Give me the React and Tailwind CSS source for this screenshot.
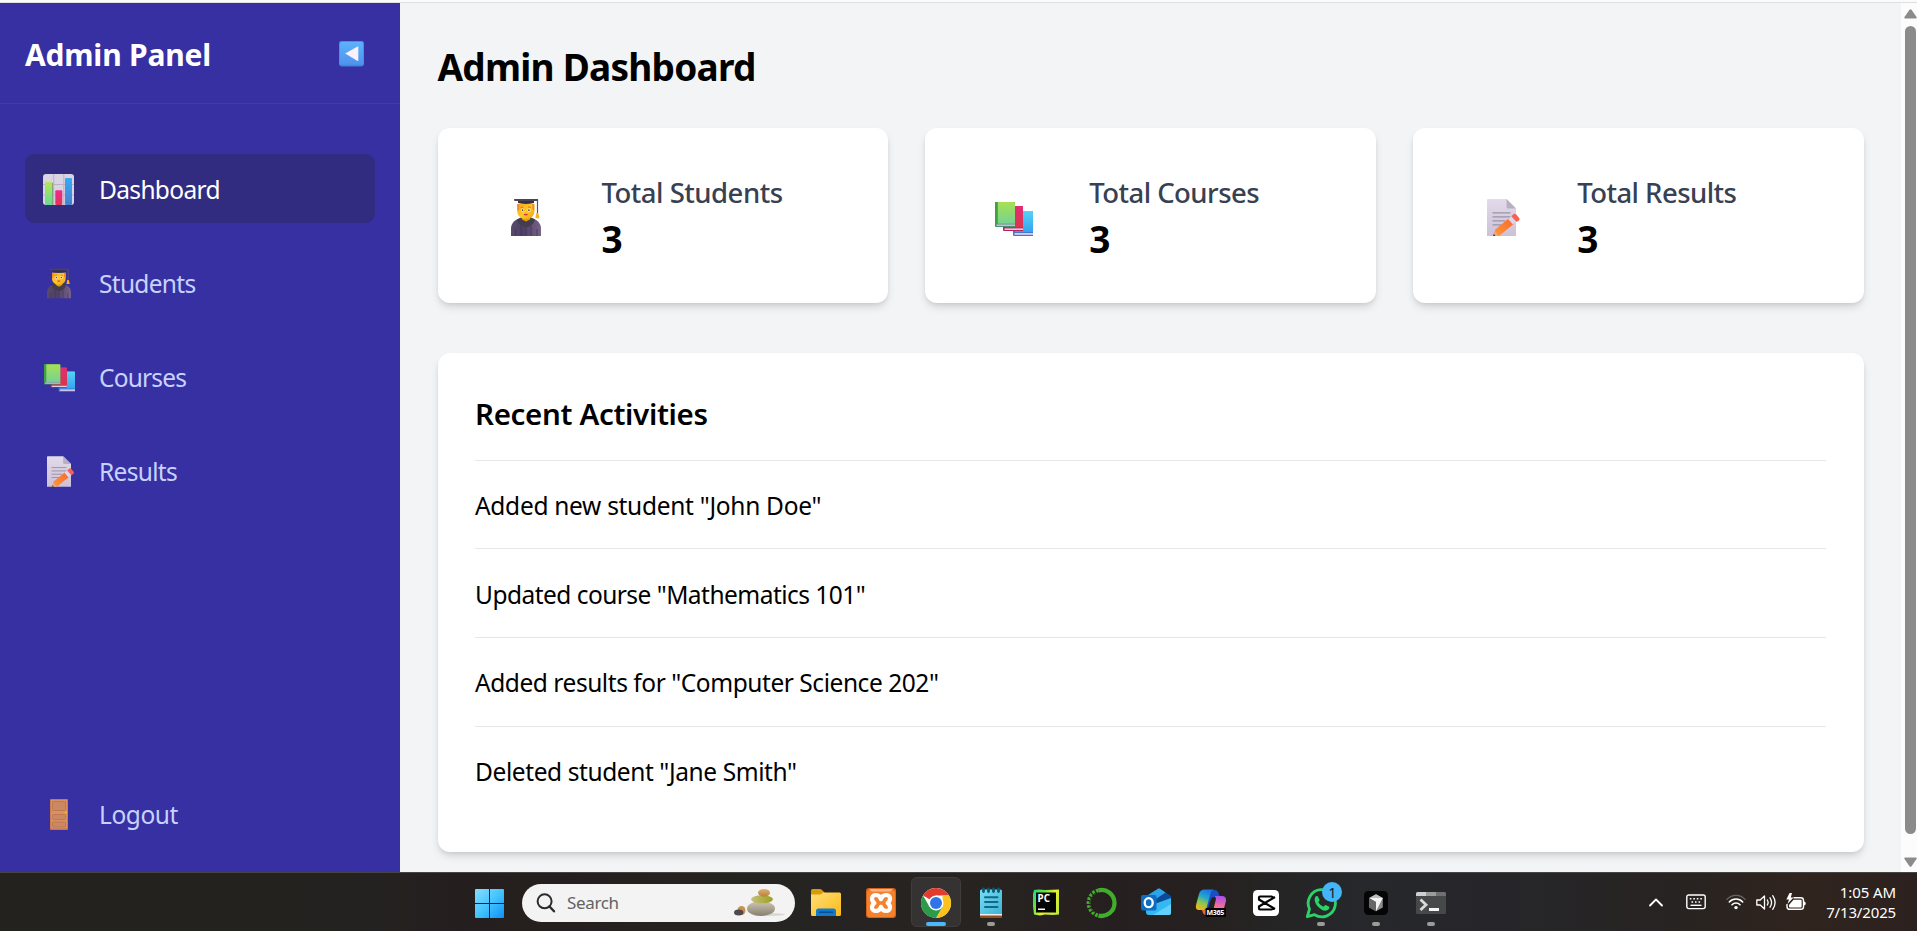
import React from "react";

/* ---------- Emoji-style icons ---------- */

function BackIcon() {
  return (
    <svg width="25" height="26" viewBox="0 0 25 26" className="mt-px">
      <defs>
        <linearGradient id="backBg" x1="0" y1="0" x2="0" y2="1">
          <stop offset="0" stopColor="#5cb2fb" />
          <stop offset="1" stopColor="#4f93ec" />
        </linearGradient>
      </defs>
      <rect width="25" height="25.6" rx="3" fill="#3f7cd0" />
      <rect x="0" y="0" width="25" height="24.6" rx="3" fill="#4591e6" />
      <rect x="1" y="1" width="23" height="22.6" rx="2" fill="url(#backBg)" />
      <path d="M6.2 12.6 18.6 5.6a.5.5 0 0 1 .7.5v13.4a.5.5 0 0 1-.7.4z" fill="#fbf0fb" />
    </svg>
  );
}

function ChartIcon() {
  return (
    <svg width="31" height="31" viewBox="0 0 31 31" className="mr-px">
      <defs>
        <linearGradient id="barG" x1="0" y1="0" x2="0" y2="1">
          <stop offset="0" stopColor="#b5e655" />
          <stop offset="1" stopColor="#62dc94" />
        </linearGradient>
        <linearGradient id="barR" x1="0" y1="0" x2="0" y2="1">
          <stop offset="0" stopColor="#f02b8c" />
          <stop offset="1" stopColor="#dc3653" />
        </linearGradient>
        <linearGradient id="barB" x1="0" y1="0" x2="0" y2="1">
          <stop offset="0" stopColor="#38aaf6" />
          <stop offset="1" stopColor="#4182d2" />
        </linearGradient>
      </defs>
      <rect width="31" height="31" rx="3" fill="#dad4e2" />
      <path d="M10.7 0v31M20.8 0v31M0 10.5h31M0 21h31" stroke="#b9b2c4" strokeWidth="1" />
      <rect x="2" y="8" width="7.6" height="23" rx="1" fill="url(#barG)" />
      <path d="M9.6 9v22" stroke="#7fa07b" strokeWidth="1" />
      <rect x="12.3" y="16.3" width="7" height="14.7" rx="1" fill="url(#barR)" />
      <rect x="22" y="4" width="7" height="27" rx="1" fill="url(#barB)" />
    </svg>
  );
}

function StudentIcon({ className }) {
  return (
    <svg className={className} viewBox="0 0 30 37">
      <defs>
        <linearGradient id="robe" x1="0" y1="0" x2="1" y2="0">
          <stop offset="0" stopColor="#564b68" />
          <stop offset=".4" stopColor="#4f3f69" />
          <stop offset="1" stopColor="#766386" />
        </linearGradient>
        <linearGradient id="face" x1="0" y1="0" x2="1" y2="1">
          <stop offset="0" stopColor="#f6a81c" />
          <stop offset=".5" stopColor="#ffc928" />
          <stop offset="1" stopColor="#f0a010" />
        </linearGradient>
      </defs>
      <path d="M0 37V29.500C0 23.500 5 19.500 11 19h8c6 .5 11 4.500 11 10.500V37z" fill="url(#robe)" />
      <path d="M10 27v10M15 28v9M20 27v10M4.500 30v7M26 30v7" stroke="#40344f" strokeWidth=".7" />
      <path d="M6 20.500 11 18h8l5 2.500c-1 4-4.500 7.500-9 7.500s-8-3.500-9-7.500z" fill="#443d4c" />
      <path d="M10 16h10l-1 4.500-4 2-4-2z" fill="#e39c0a" />
      <path d="M6.300 5h17v8c0 4-4 7-8.500 7s-8.500-3-8.500-7z" fill="url(#face)" />
      <path d="M6.300 5h2v5l-2 2zM23.300 5h-2v5l2 2z" fill="#f28b22" />
      <circle cx="11.500" cy="11" r="1.500" fill="#fff" />
      <circle cx="18" cy="11" r="1.500" fill="#fff" />
      <circle cx="11.600" cy="11.100" r=".9" fill="#4b3549" />
      <circle cx="17.900" cy="11.100" r=".9" fill="#4b3549" />
      <path d="M9.500 8.400 12.500 8M17 8l3 .4" stroke="#c96b17" strokeWidth=".8" />
      <path d="M12.400 15.200q2.400-1 4.800 0-2.400 2.400-4.800 0z" fill="#d9304a" />
      <path d="M7 1.200h16V4q-8 2-16 0z" fill="#37303f" />
      <rect x="3" y="0" width="24.200" height="1.900" rx=".8" fill="#4b4357" />
      <path d="M26.500 1v13.500" stroke="#5b5068" strokeWidth="1.200" />
      <path d="M25.300 14h2l1.200 5.200h-4.200z" fill="#f7b21a" />
    </svg>
  );
}

function BooksIcon({ className }) {
  return (
    <svg className={className} viewBox="0 0 38 34">
      <defs>
        <linearGradient id="bkG" x1="0" y1="0" x2="0" y2="1">
          <stop offset="0" stopColor="#a8e052" />
          <stop offset="1" stopColor="#74d392" />
        </linearGradient>
        <linearGradient id="bkR" x1="0" y1="0" x2="0" y2="1">
          <stop offset="0" stopColor="#e32c78" />
          <stop offset="1" stopColor="#dc3547" />
        </linearGradient>
        <linearGradient id="bkB" x1="0" y1="0" x2="0" y2="1">
          <stop offset="0" stopColor="#57d2f7" />
          <stop offset="1" stopColor="#35a4ef" />
        </linearGradient>
      </defs>
      <path d="M18 9h19q1 0 1 1v24H19q-1 0-1-1.500z" fill="#3d79cf" />
      <path d="M20 9h17q1 0 1 1v20H20z" fill="url(#bkB)" />
      <rect x="19.500" y="31" width="18.500" height="1.800" fill="#dccdf0" />
      <path d="M8 4h19q1 0 1 1v24H9q-1 0-1-1.500z" fill="#b32459" />
      <path d="M10 4h17q1 0 1 1v20.500H10z" fill="url(#bkR)" />
      <rect x="9.500" y="26.400" width="18.500" height="1.600" fill="#e3cdec" />
      <path d="M0 0h20v25H1.200Q0 25 0 23.500z" fill="#3f8b65" />
      <path d="M0 0h3v21.500L0 23z" fill="#3fa144" />
      <path d="M2.800 0H19q1 0 1 1v20.800H2.800z" fill="url(#bkG)" />
      <rect x="1.500" y="22.400" width="18.500" height="1.700" fill="#c3bfd8" />
    </svg>
  );
}

function MemoIcon({ className }) {
  return (
    <svg className={className} viewBox="0 0 29 37">
      <defs>
        <linearGradient id="paper" x1="0" y1="0" x2="0" y2="1">
          <stop offset="0" stopColor="#e2dbea" />
          <stop offset="1" stopColor="#cdc0d8" />
        </linearGradient>
        <linearGradient id="pencil" x1="0" y1="1" x2="1" y2="0">
          <stop offset="0" stopColor="#ff9a3c" />
          <stop offset="1" stopColor="#f8672a" />
        </linearGradient>
      </defs>
      <path d="M0 1q0-1 1-1h18.500L29 9.500V37H0z" fill="url(#paper)" />
      <path d="M19.500 0 29 9.500h-8q-1.500 0-1.500-1.500z" fill="#b9afc3" />
      <path d="M5.500 13.800h18M5.500 17.800h18M5.500 21.800h13M5.500 25.800h9" stroke="#9b93a6" strokeWidth="1.200" />
      <path d="m6 37 2.300-6.600L22.300 19l5 5.500L12 37z" fill="url(#pencil)" />
      <path d="m6 37 2-5 4 5z" fill="#e2a98a" />
      <path d="m6 37 .8-2L8.500 37z" fill="#45323a" />
      <path d="m21 20 3.600-3 4.900 5.600-3.500 3z" fill="#ddd5ea" />
      <path d="m24.300 17.200 2.400-2.100q1.200-1 2.300.2l3.200 3.600q1 1.200-.2 2.300L29.500 23z" fill="#fb5f52" />
    </svg>
  );
}

function DoorIcon() {
  return (
    <svg width="18" height="31" viewBox="0 0 18 31">
      <rect width="18" height="31" rx=".8" fill="#c5744c" />
      <rect x=".8" y=".8" width="16.400" height="28.600" fill="#db905e" />
      <rect x="2.500" y="2.500" width="13" height="9" rx=".8" fill="#c98a63" stroke="#b97450" strokeWidth=".8" />
      <rect x="2.500" y="15.500" width="13" height="5" rx=".8" fill="#c98a63" stroke="#b97450" strokeWidth=".8" />
      <rect x="2.500" y="23" width="13" height="5" rx=".8" fill="#c98a63" stroke="#b97450" strokeWidth=".8" />
      <circle cx="16" cy="13.500" r="1.300" fill="#fbad13" />
    </svg>
  );
}

/* ---------- Sidebar ---------- */

function NavItem({ icon, label, track, active }) {
  return (
    <a
      className={
        "flex h-[68.75px] w-[350px] items-center rounded-[9px] pl-[18px] " +
        (active ? "bg-[#312c80] text-white" : "text-[#c7d2fe]")
      }
    >
      <span className="flex w-8 justify-center pt-[3px]">{icon}</span>
      <span className={"ml-[24px] pt-[4px] text-[24.5px] leading-[34px] " + track}>{label}</span>
    </a>
  );
}

function Sidebar() {
  return (
    <aside className="flex w-[400px] shrink-0 flex-col bg-[#3730a3]">
      <div className="flex h-[101px] shrink-0 items-center justify-between border-b border-[#4137bf] pr-9 pl-[25px] text-white">
        <h2 className="pt-[3px] text-[30px] leading-[40px] font-bold tracking-[-0.2px]">Admin Panel</h2>
        <BackIcon />
      </div>
      <nav className="flex flex-col gap-[25px] px-[25px] pt-[50px]">
        <NavItem active icon={<ChartIcon />} label="Dashboard" track="tracking-[-0.66px]" />
        <NavItem icon={<StudentIcon className="h-[31px] w-6" />} label="Students" track="tracking-[-0.7px]" />
        <NavItem icon={<BooksIcon className="mt-[2px] ml-px h-7 w-[31px]" />} label="Courses" track="tracking-[-0.8px]" />
        <NavItem icon={<MemoIcon className="h-[31px] w-6 overflow-visible" />} label="Results" track="tracking-[-0.7px]" />
      </nav>
      <div className="mt-auto px-[25px] pb-[25px]">
        <NavItem icon={<DoorIcon />} label="Logout" track="tracking-[-0.45px]" />
      </div>
    </aside>
  );
}

/* ---------- Main ---------- */

const cardShadow = "shadow-[0_5px_8px_-1px_rgba(0,0,0,0.13),0_2.5px_5px_-2.5px_rgba(0,0,0,0.12)]";

function StatCard({ icon, label, track }) {
  return (
    <div className={"flex h-[175px] items-center rounded-[12px] bg-white " + cardShadow}>
      <div className="ml-[68px] flex w-10 justify-center">{icon}</div>
      <div className="ml-[56px] pt-px">
        <p className={"text-[27.5px] leading-[44px] font-medium text-[#374151] " + track}>{label}</p>
        <p className="text-[37px] leading-[47px] font-bold text-black">3</p>
      </div>
    </div>
  );
}

const activities = [
  { text: 'Added new student "John Doe"', track: "tracking-[-0.3px]" },
  { text: 'Updated course "Mathematics 101"', track: "tracking-[-0.53px]" },
  { text: 'Added results for "Computer Science 202"', track: "tracking-[-0.45px]" },
  { text: 'Deleted student "Jane Smith"', track: "tracking-[-0.41px]" },
];

function Main() {
  return (
    <main className="min-w-0 flex-1 bg-[#f3f4f6] px-[37.5px] pt-[37.5px] text-black">
      <h1 className="mb-[35.5px] text-[37px] leading-[52px] font-bold tracking-[-0.76px]">Admin Dashboard</h1>
      <div className="grid grid-cols-3 gap-[37.5px]">
        <StatCard icon={<StudentIcon className="mt-[4px] h-[37px] w-[30px]" />} label="Total Students" track="tracking-[-0.5px]" />
        <StatCard icon={<BooksIcon className="mt-[7px] ml-[2px] h-[34px] w-[38px]" />} label="Total Courses" track="tracking-[-0.55px]" />
        <StatCard icon={<MemoIcon className="mt-[4px] h-[37px] w-[29px] overflow-visible" />} label="Total Results" track="tracking-[-0.54px]" />
      </div>
      <section className={"mt-[50px] h-[498.5px] rounded-[12px] bg-white p-[37.5px] " + cardShadow}>
        <h2 className="text-[29.5px] leading-[46px] font-semibold tracking-[-0.33px]">Recent Activities</h2>
        <ul className="mt-[23px]">
          {activities.map((a) => (
            <li
              key={a.text}
              className={"flex h-[88.75px] items-center border-t border-[#e5e7eb] pt-[3px] text-[24.5px] leading-[36px] " + a.track}
            >
              {a.text}
            </li>
          ))}
        </ul>
      </section>
    </main>
  );
}

function Scrollbar() {
  return (
    <div className="flex w-4 shrink-0 flex-col items-center bg-[#fcfcfc] pt-[6px] pb-[5px] pl-[3px]">
      <svg width="13" height="10" viewBox="0 0 13 10">
        <path d="M5.500.8q1-1.200 2 0l5 7.200q.7 1.500-.8 1.600H1.300Q-.2 9.500.5 8z" fill="#8b8b8b" />
      </svg>
      <div className="mt-[7px] w-[11px] flex-1 rounded-full bg-[#8b8b8b]" />
      <svg className="mt-[23px]" width="13" height="10" viewBox="0 0 13 10">
        <path d="M5.500 9.200q1 1.200 2 0l5-7.200q.7-1.500-.8-1.600H1.300Q-.2.500.5 2z" fill="#8b8b8b" />
      </svg>
    </div>
  );
}

/* ---------- Taskbar ---------- */

function Slot({ children }) {
  return (
    <svg width="55" height="58" viewBox="0 0 55 58" className="shrink-0">
      {children}
    </svg>
  );
}

function RunningDot() {
  return <rect x="23" y="49" width="8" height="4" rx="2" fill="#9d9a9a" />;
}

function ExplorerIcon() {
  return (
    <Slot>
      <defs>
        <linearGradient id="fold" x1="0" y1="0" x2="1" y2="1">
          <stop offset="0" stopColor="#ffdf77" />
          <stop offset="1" stopColor="#fbb917" />
        </linearGradient>
      </defs>
      <path d="M12 17.500q0-1.500 1.500-1.500h7.500q1 0 2 1l2.500 2.500V25H12z" fill="#d99a08" />
      <path d="M12 21.500h9q1 0 2-1l1-1h16.500q1.500 0 1.500 1.500v20.500q0 1.500-1.500 1.500h-27Q12 43 12 41.500z" fill="url(#fold)" />
      <path d="M17 43v-5q0-2.500 2.500-2.500h15Q37 35.500 37 38v5z" fill="#0f7ad0" />
      <path d="M20.500 39.200h13" stroke="#0a4f92" strokeWidth="1.500" strokeLinecap="round" />
    </Slot>
  );
}

function XamppIcon() {
  return (
    <Slot>
      <rect x="12" y="15" width="30" height="30" rx="3" fill="#d6621c" />
      <rect x="13" y="17" width="28" height="27" rx="3" fill="#f5812c" />
      <path d="M15 16h24l-3 2.600H18z" fill="#f7b48a" />
      <path
        d="M27 26.300C25.500 20.600 18 20.800 18 25.600q0 2.800 2.400 4.400-2.400 1.600-2.400 4.400C18 39.200 25.500 39.400 27 33.700 28.500 39.400 36 39.200 36 34.400q0-2.800-2.400-4.400 2.400-1.600 2.400-4.400C36 20.800 28.500 20.600 27 26.300z"
        fill="none"
        stroke="#fff"
        strokeWidth="4.200"
        strokeLinejoin="round"
      />
      <path d="M24 30h6" stroke="#f5812c" strokeWidth="2.600" strokeLinecap="round" />
    </Slot>
  );
}

function ChromeIcon() {
  return (
    <Slot>
      <rect x="2.500" y="4.500" width="49" height="49" rx="5" fill="#353331" stroke="#403e3c" />
      <circle cx="27" cy="30" r="15" fill="#fff" />
      <path d="M27 30 14 22.500A15 15 0 0 1 40 22.500H27z" fill="#e33b2e" />
      <path d="M40 22.500A15 15 0 0 1 27 45l6.500-11.200L33.500 22.500z" fill="#fcc31e" />
      <path d="M14 22.500A15 15 0 0 0 27 45l6.500-11.200L20.500 33.700z" fill="#2c9a48" />
      <circle cx="27" cy="30" r="7.500" fill="#fff" />
      <circle cx="27" cy="30" r="6" fill="#2f74e8" />
      <rect x="17" y="49" width="20" height="4" rx="2" fill="#4cb8fb" />
    </Slot>
  );
}

function NotepadIcon() {
  return (
    <Slot>
      <defs>
        <linearGradient id="note" x1="0" y1="0" x2="1" y2="1">
          <stop offset="0" stopColor="#77dcf3" />
          <stop offset="1" stopColor="#3fb3d6" />
        </linearGradient>
      </defs>
      <rect x="16" y="40" width="22" height="5" rx="1" fill="#93501f" />
      <rect x="16" y="38" width="22" height="4.500" fill="#f1efee" />
      <path d="M16 18q0-1.500 1.500-1.500h19Q38 16.500 38 18v23H16z" fill="url(#note)" />
      <path d="M19.500 16v2.500M24.500 16v2.500M29.500 16v2.500M34.500 16v2.500" stroke="#0d5873" strokeWidth="2.800" strokeLinecap="round" />
      <path d="M21 24.200h12.500M21 29h12.500M21 34h12.500" stroke="#12688a" strokeWidth="2" strokeLinecap="round" />
      <RunningDot />
    </Slot>
  );
}

function PyCharmIcon() {
  return (
    <Slot>
      <defs>
        <linearGradient id="pyc" x1="0" y1="0" x2="1" y2=".6">
          <stop offset="0" stopColor="#21d789" />
          <stop offset=".35" stopColor="#63e23a" />
          <stop offset=".65" stopColor="#e8f230" />
          <stop offset="1" stopColor="#c4e83c" />
        </linearGradient>
      </defs>
      <path d="M14 21 15 17l5-.5 6 .5 14-.5v25l-6 .5-8-.5-5 1-6-1-1-8z" fill="url(#pyc)" />
      <rect x="17" y="19.500" width="20" height="20" fill="#050505" />
      <text x="18.600" y="29" fontFamily="Noto Sans, sans-serif" fontWeight="700" fontSize="9.800" fill="#fff">PC</text>
      <rect x="19" y="35.500" width="7" height="1.500" fill="#fff" />
    </Slot>
  );
}

function AnacondaIcon() {
  return (
    <Slot>
      <path d="M24 17.300A13 13 0 1 1 24 42.600" transform="translate(.5 0)" fill="none" stroke="#41ae2b" strokeWidth="4.300" />
      <path d="M24.500 17.300A13 13 0 0 0 24.500 42.600" fill="none" stroke="#41ae2b" strokeWidth="3.800" strokeDasharray="2.600 1.300" />
      <path d="M22 19.500A12 12 0 0 0 22 40.500" fill="none" stroke="#242020" strokeWidth="1" strokeDasharray="2 1.500" />
    </Slot>
  );
}

function OutlookIcon() {
  return (
    <Slot>
      <path d="M16 24 29 15.800q1-.6 2 0L42 23.500V38L20 41z" fill="#1268b8" />
      <path d="M18 22.700 29 15.800q1-.6 2 0l5.500 3.700-17 11.500z" fill="#2ea3ea" />
      <path d="m19 31 18-11.300 5 3.600v4L26 36z" fill="#0b4a98" />
      <path d="M17 34 42 25v14.500q0 2.500-2.500 2.500H20q-3 0-3-3z" fill="#35b8f1" />
      <path d="m24 42 18-11v8.500q0 2.500-2.500 2.500z" fill="#5ed2fa" />
      <rect x="12" y="22" width="15.500" height="15.500" rx="1.800" fill="#0f6cc4" />
      <ellipse cx="19.700" cy="29.700" rx="4" ry="4.500" fill="none" stroke="#fff" strokeWidth="2.300" />
    </Slot>
  );
}

function CopilotIcon() {
  return (
    <Slot>
      <defs>
        <linearGradient id="cpA" x1=".6" y1="0" x2=".2" y2="1">
          <stop offset="0" stopColor="#1d74e8" />
          <stop offset=".35" stopColor="#22a5cf" />
          <stop offset=".65" stopColor="#8fc64b" />
          <stop offset="1" stopColor="#f6b41f" />
        </linearGradient>
        <linearGradient id="cpB" x1=".5" y1="0" x2=".4" y2="1">
          <stop offset="0" stopColor="#a951e6" />
          <stop offset=".5" stopColor="#ee6ca0" />
          <stop offset="1" stopColor="#f79a4a" />
        </linearGradient>
      </defs>
      <path d="M22 17h9q2.500 0 3.300 2.500L36 24h-6q-2 0-3 2l-4 12-6-4z" fill="#1a4fc4" />
      <path d="M20.500 16.500H30q-2.500.5-3.500 4L22.500 35q-.6 2-3 2H15q-4 0-3-5l3-11q1.200-4.500 5.500-4.500z" fill="url(#cpA)" />
      <path d="M31 23h7q4.500 0 4 5l-2.500 9q-1.200 5-5.500 5h-9q3 0 4-4l3-12z" fill="url(#cpB)" />
      <path d="M18 37h6l-2 5q-3 0-4-5z" fill="#f2642e" />
      <rect x="21.500" y="35" width="20.500" height="9" rx="1" fill="#050505" />
      <text x="22.600" y="42.200" fontFamily="Noto Sans, sans-serif" fontWeight="700" fontSize="7" textLength="17.600" fill="#fff">M365</text>
    </Slot>
  );
}

function CapCutIcon() {
  return (
    <Slot>
      <rect x="14" y="17" width="26" height="26" rx="4.500" fill="#fff" />
      <path d="M36 24 20 33.500v2q0 1 1 1h11.500q1 0 1-1v-1M36 36 20 26.500v-2q0-1 1-1h11.500q1 0 1 1v1" fill="none" stroke="#050505" strokeWidth="2.200" />
    </Slot>
  );
}

function WhatsAppIcon() {
  return (
    <Slot>
      <path d="M13.300 43.700 15.500 36A13.600 13.600 0 1 1 20.500 41.700z" fill="#25292a" stroke="#2bd366" strokeWidth="2.800" strokeLinejoin="round" />
      <path d="M21 24.500q1.200-2 2.800-1.300l1.700 3.700q.2.700-1.200 2.300 1.700 3 5.200 4.500 1.500-2 2.200-1.700l3.600 1.800q.5 2.700-3 3.800-3.700.8-8-3.500-4.700-4.800-3.300-9.600z" fill="#2bd366" />
      <circle cx="38" cy="19" r="10" fill="#43b5f8" />
      <text x="38.500" y="24.500" textAnchor="middle" fontFamily="Noto Sans, sans-serif" fontSize="14.500" fill="#0d1c28">1</text>
      <RunningDot />
    </Slot>
  );
}

function CursorIcon() {
  return (
    <Slot>
      <rect x="15" y="18" width="24" height="24" rx="4.500" fill="#050505" />
      <path d="m27 21.300 6.800 3.800v9.400L27 38.300l-6.800-3.800v-9.400z" fill="#8a8a8a" />
      <path d="m27 21.300 6.800 3.800H20.200z" fill="#bdbdbd" />
      <path d="M20.200 25.100h13.600L27 38.300V29z" fill="#f3f3f3" />
      <path d="m20.200 25.100 6.800 3.900v9.300l-6.800-3.800z" fill="#676767" />
      <RunningDot />
    </Slot>
  );
}

function TerminalIcon() {
  return (
    <Slot>
      <rect x="12" y="19" width="30" height="22" rx="1.500" fill="#47484a" />
      <path d="M12 23v-2.500q0-1.500 1.500-1.500H22v4z" fill="#cfcfcf" />
      <path d="M22 19h10v4H22z" fill="#9b9b9b" />
      <path d="M32 19h8.500q1.500 0 1.500 1.500V23H32z" fill="#6f7072" />
      <path d="m16.500 26.500 5.500 5.300-5.500 5.300" fill="none" stroke="#d9d9d9" strokeWidth="2.800" />
      <rect x="25" y="35" width="10" height="3" fill="#f5f5f5" />
      <RunningDot />
    </Slot>
  );
}

function WindowsIcon() {
  return (
    <svg width="29" height="29" viewBox="0 0 29 29">
      <defs>
        <linearGradient id="win" x1="0" y1="0" x2="1" y2="1">
          <stop offset="0" stopColor="#86dcfd" />
          <stop offset=".5" stopColor="#44c4fd" />
          <stop offset="1" stopColor="#0d90f8" />
        </linearGradient>
      </defs>
      <path d="M0 1q0-1 1-1h13v14H0zM15 0h13q1 0 1 1v13H15zM0 15h14v14H1q-1 0-1-1zM15 15h14v13q0 1-1 1H15z" fill="url(#win)" />
    </svg>
  );
}

function StonesIcon() {
  return (
    <svg width="52" height="28" viewBox="0 0 52 28">
      <defs>
        <linearGradient id="st1" x1="0" y1="0" x2="0" y2="1">
          <stop offset="0" stopColor="#d0c8b4" />
          <stop offset="1" stopColor="#877f6f" />
        </linearGradient>
        <linearGradient id="st2" x1="0" y1="0" x2="1" y2="0">
          <stop offset="0" stopColor="#c5bf7c" />
          <stop offset="1" stopColor="#9aa21e" />
        </linearGradient>
        <linearGradient id="st3" x1="0" y1="0" x2="0" y2="1">
          <stop offset="0" stopColor="#e0b173" />
          <stop offset="1" stopColor="#b87f3c" />
        </linearGradient>
      </defs>
      <ellipse cx="34" cy="25.500" rx="17" ry="1.500" fill="#d9d6d2" />
      <ellipse cx="7.500" cy="21.500" rx="4" ry="4.500" fill="#c8924e" />
      <ellipse cx="4.700" cy="23.500" rx="4.700" ry="3" fill="#4b4b4d" />
      <ellipse cx="27" cy="19.500" rx="14" ry="7.500" fill="url(#st1)" />
      <ellipse cx="28" cy="10.300" rx="11" ry="4" fill="url(#st2)" />
      <ellipse cx="30" cy="3.800" rx="6" ry="3.800" fill="url(#st3)" />
    </svg>
  );
}

function Taskbar() {
  return (
    <footer className="flex h-[59px] shrink-0 items-center border-t border-[#474544] bg-[linear-gradient(90deg,#24221f_0%,#242220_20%,#251e1e_24%,#252421_40%,#272321_52%,#261f1f_58%,#25211f_63%,#26282c_71%,#26262a_78%,#282321_88%,#30241e_94%,#2c211e_100%)]">
      <div className="ml-[475px] pt-[2px]">
        <WindowsIcon />
      </div>
      <div className="mt-px ml-[18px] flex h-[38px] w-[273px] items-center rounded-full bg-[#f3f3f3] pl-[14px]">
        <svg width="20" height="20" viewBox="0 0 20 20" fill="none" stroke="#2c2c2e" strokeWidth="2">
          <circle cx="8.600" cy="8.300" r="7" />
          <path d="m13.500 13.500 4.500 4.800" strokeWidth="2.400" strokeLinecap="round" />
        </svg>
        <span className="ml-[11px] w-[60px] pt-px text-[17px] leading-6 tracking-[-0.35px] text-[#626262]">Search</span>
        <span className="ml-[107px]">
          <StonesIcon />
        </span>
      </div>
      <div className="ml-[4px] flex">
        <ExplorerIcon />
        <XamppIcon />
        <ChromeIcon />
        <NotepadIcon />
        <PyCharmIcon />
        <AnacondaIcon />
        <OutlookIcon />
        <CopilotIcon />
        <CapCutIcon />
        <WhatsAppIcon />
        <CursorIcon />
        <TerminalIcon />
      </div>
      <div className="ml-auto flex items-center">
        <svg width="14" height="9" viewBox="0 0 14 9" fill="none" stroke="#fff" strokeWidth="1.800" strokeLinecap="round" strokeLinejoin="round">
          <path d="m1 7.500 6-6 6 6" />
        </svg>
        <svg className="ml-[23px]" width="20" height="16" viewBox="0 0 20 16" fill="none" stroke="#fff" strokeWidth="1.400">
          <rect x=".8" y="1" width="18.400" height="13.600" rx="2" />
          <path d="M3.800 4.800h13" strokeWidth="1.600" strokeDasharray="1.600 1.900" />
          <path d="M5.500 8h10" strokeWidth="1.600" strokeDasharray="1.600 1.900" />
          <path d="M4.500 11.300h11" />
        </svg>
        <svg className="ml-[20px]" width="20" height="16" viewBox="0 0 20 16" fill="none" stroke="#fff" strokeWidth="1.600" strokeLinecap="round">
          <path d="M.9 5.400a12.300 12.300 0 0 1 18.200 0" stroke="#6b6664" strokeWidth="1.300" />
          <path d="M3.300 8a9 9 0 0 1 13.400 0" />
          <path d="M6 10.700a5.600 5.600 0 0 1 8 0" />
          <circle cx="10" cy="13.600" r="1.700" fill="#fff" stroke="none" />
        </svg>
        <svg className="ml-[10px]" width="20" height="17" viewBox="0 0 20 17" fill="none" stroke="#fff" strokeWidth="1.300" strokeLinecap="round" strokeLinejoin="round">
          <path d="M.8 6v5h3.400l4.300 4V2L4.200 6z" />
          <path d="M11.300 6q1.600 2.500 0 5M14 3.800q3.200 4.700 0 9.400M16.700 1.700q4.800 6.800 0 13.600" />
        </svg>
        <svg className="ml-[10px]" width="20" height="18" viewBox="0 0 20 18">
          <path d="M7.500 4.700h7.300q2.700 0 2.700 2.700v6.300q0 2.600-2.700 2.600H3.700Q1 16.300 1 13.700V11" fill="none" stroke="#fff" strokeWidth="1.400" />
          <path d="M7.500 6.700H15q.6 0 .6.800v6q0 .9-.8.900H4q-1 0-1-.9V12z" fill="#fff" />
          <path d="M18 8.500q1.700.2 1.700 2t-1.700 2z" fill="#fff" />
          <path d="M3.500 0 .3 6.500H3L1.500 11 7.500 4.500H4.800L6 0z" fill="#fff" />
        </svg>
        <div className="ml-[20px] w-[70px] text-right text-[15px] leading-5 text-white">
          <p className="tracking-[-0.1px]">1:05 AM</p>
          <p className="tracking-[-0.15px]">7/13/2025</p>
        </div>
      </div>
      <div className="w-[21px]" />
    </footer>
  );
}

export default function App() {
  return (
    <div className="flex h-[931px] w-[1917px] flex-col overflow-hidden bg-white font-['Noto_Sans',sans-serif]">
      <div className="h-[3px] shrink-0 border-b border-[#dfe0e1] bg-[#fbfbfb]" />
      <div className="flex min-h-0 flex-1">
        <Sidebar />
        <Main />
        <Scrollbar />
      </div>
      <Taskbar />
    </div>
  );
}
